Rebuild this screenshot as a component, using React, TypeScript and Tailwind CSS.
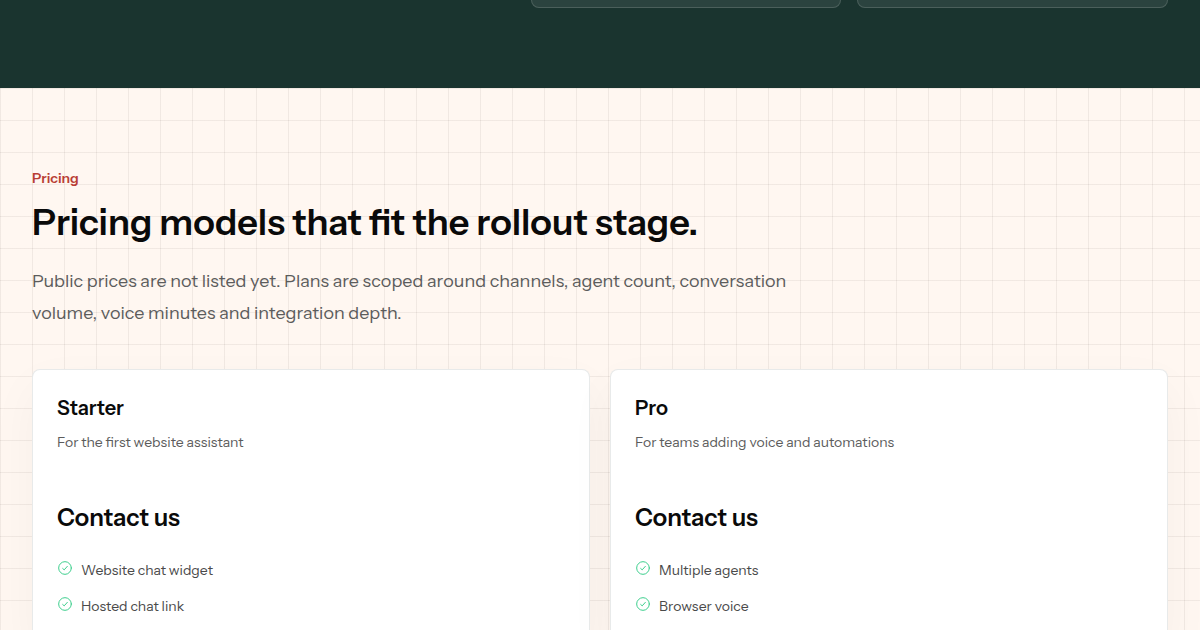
import React from 'react';

interface Plan {
  name: string;
  description: string;
  price: string;
  features: string[];
}

const plans: Plan[] = [
  {
    name: 'Starter',
    description: 'For the first website assistant',
    price: 'Contact us',
    features: ['Website chat widget', 'Hosted chat link'],
  },
  {
    name: 'Pro',
    description: 'For teams adding voice and automations',
    price: 'Contact us',
    features: ['Multiple agents', 'Browser voice'],
  },
];

function CheckIcon() {
  return (
    <svg
      viewBox="0 0 24 24"
      fill="none"
      stroke="currentColor"
      strokeWidth="1.5"
      strokeLinecap="round"
      strokeLinejoin="round"
      className="mt-0.5 size-4 shrink-0 text-[#3ecf8e]"
      aria-hidden="true"
    >
      <circle cx="12" cy="12" r="9.5" />
      <path d="M8.5 12.7L10.8 14.8L15.5 9.5" />
    </svg>
  );
}

function PlanCard({ plan }: { plan: Plan }) {
  return (
    <article className="rounded-lg border border-[#1a342f]/10 bg-white p-6 shadow-[0_18px_50px_rgba(26,52,47,0.04)]">
      <h3 className="text-xl leading-7 font-semibold">{plan.name}</h3>
      <p className="mt-2 text-sm leading-6 text-[#5c5c5c]">{plan.description}</p>
      <p className="mt-12 text-2xl leading-8 font-semibold">{plan.price}</p>
      <ul className="mt-6 space-y-3">
        {plan.features.map((feature) => (
          <li key={feature} className="flex gap-2 text-sm leading-6 text-[#4a4a4a]">
            <CheckIcon />
            {feature}
          </li>
        ))}
      </ul>
    </article>
  );
}

export default function App() {
  return (
    <main className="h-screen overflow-hidden bg-[#fff7f1] font-['Instrument_Sans','Inter',sans-serif] text-[#0a0a0a]">
      <section className="bg-[#1a342f] px-8 pb-20">
        <div className="grid grid-cols-[0.72fr_1fr] gap-10">
          <div />
          <div className="grid grid-cols-2 gap-4">
            <div className="h-2 rounded-b-lg border border-t-0 border-white/15 bg-white/8" />
            <div className="h-2 rounded-b-lg border border-t-0 border-white/15 bg-white/8" />
          </div>
        </div>
      </section>

      <section className="bg-[linear-gradient(to_right,rgba(60,40,40,0.07)_1px,transparent_1px),linear-gradient(to_bottom,rgba(60,40,40,0.07)_1px,transparent_1px)] bg-[size:32px_32px] px-8 py-20">
        <div className="max-w-3xl">
          <p className="text-sm leading-5 font-semibold text-[#b93e35]">Pricing</p>
          <h2 className="mt-3 text-4xl leading-[45px] font-semibold">
            Pricing models that fit the rollout stage.
          </h2>
          <p className="mt-5 text-lg leading-8 text-[#5c5c5c]">
            Public prices are not listed yet. Plans are scoped around channels, agent count, conversation volume,
            voice minutes and integration depth.
          </p>
        </div>
        <div className="mt-10 grid grid-cols-2 gap-5">
          {plans.map((plan) => (
            <PlanCard key={plan.name} plan={plan} />
          ))}
        </div>
      </section>
    </main>
  );
}
